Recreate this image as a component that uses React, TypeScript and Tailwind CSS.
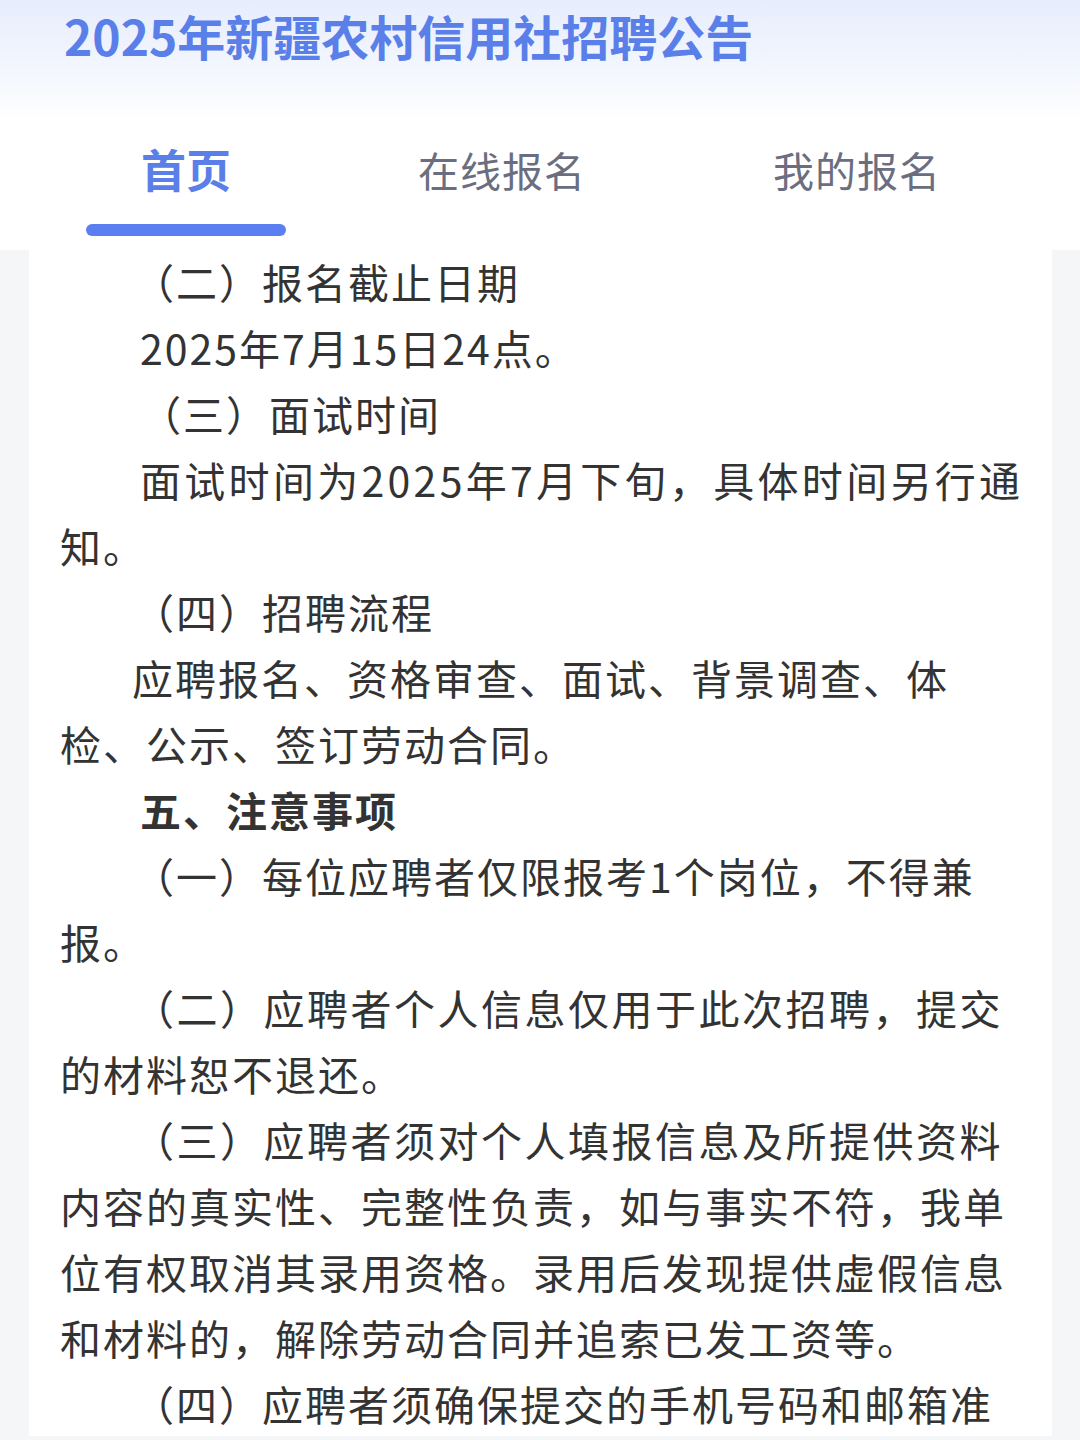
const lines: { text: string; pl: string; ls?: string; bold?: boolean }[] = [
  { text: "（二）报名截止日期", pl: "pl-[73px]" },
  { text: "2025年7月15日24点。", pl: "pl-[80px]" },
  { text: "（三）面试时间", pl: "pl-[80px]" },
  { text: "面试时间为2025年7月下旬，具体时间另行通", pl: "pl-[80px]", ls: "tracking-[3.3px]" },
  { text: "知。", pl: "pl-0" },
  { text: "（四）招聘流程", pl: "pl-[73px]" },
  { text: "应聘报名、资格审查、面试、背景调查、体", pl: "pl-[72px]" },
  { text: "检、公示、签订劳动合同。", pl: "pl-0" },
  { text: "五、注意事项", pl: "pl-[80px]", bold: true },
  { text: "（一）每位应聘者仅限报考1个岗位，不得兼", pl: "pl-[73px]" },
  { text: "报。", pl: "pl-0" },
  { text: "（二）应聘者个人信息仅用于此次招聘，提交", pl: "pl-[73px]", ls: "tracking-[2.5px]" },
  { text: "的材料恕不退还。", pl: "pl-0" },
  { text: "（三）应聘者须对个人填报信息及所提供资料", pl: "pl-[73px]", ls: "tracking-[2.5px]" },
  { text: "内容的真实性、完整性负责，如与事实不符，我单", pl: "pl-0" },
  { text: "位有权取消其录用资格。录用后发现提供虚假信息", pl: "pl-0" },
  { text: "和材料的，解除劳动合同并追索已发工资等。", pl: "pl-0" },
  { text: "（四）应聘者须确保提交的手机号码和邮箱准", pl: "pl-[73px]" },
];

export default function App() {
  return (
    <div className="h-[1440px] overflow-hidden bg-[#f5f6f8] font-['Noto_Sans_CJK_SC',sans-serif]">
      {/* header */}
      <div className="h-[250px] bg-[linear-gradient(180deg,#e6edfc_0%,#f4f7fe_30%,#ffffff_48%)]">
        <div className="flex h-[70px] items-center pl-[64px]">
          <h1 className="whitespace-nowrap text-[48px] font-bold leading-none text-[#5a7fe9]">
            2025年新疆农村信用社招聘公告
          </h1>
        </div>
        <div className="ml-[86px] grid grid-cols-[200px_432px_278px] pt-[73px]">
          <div className="flex flex-col items-center">
            <span className="h-[52px] text-[45px] font-bold leading-[52px] text-[#5a7fe9]">
              首页
            </span>
            <span className="mt-[29px] h-[12px] w-[200px] rounded-full bg-[#5b7ff0]" />
          </div>
          <div className="flex justify-center">
            <span className="h-[52px] text-[41px] leading-[52px] tracking-[1px] text-[#6b6e80]">
              在线报名
            </span>
          </div>
          <div className="flex justify-center">
            <span className="h-[52px] text-[41px] leading-[52px] tracking-[1px] text-[#6b6e80]">
              我的报名
            </span>
          </div>
        </div>
      </div>

      {/* article */}
      <div className="pl-[29px] pr-[28px]">
        <div className="-mt-[2px] bg-white pl-[31px]">
          {lines.map((l, i) => (
            <div
              key={i}
              className={`${l.pl} ${l.ls ?? "tracking-[2px]"} h-[66px] whitespace-nowrap text-[41px] leading-[66px] text-[#333333] ${
                l.bold ? "font-bold" : ""
              }`}
            >
              {l.text}
            </div>
          ))}
        </div>
      </div>
    </div>
  );
}
